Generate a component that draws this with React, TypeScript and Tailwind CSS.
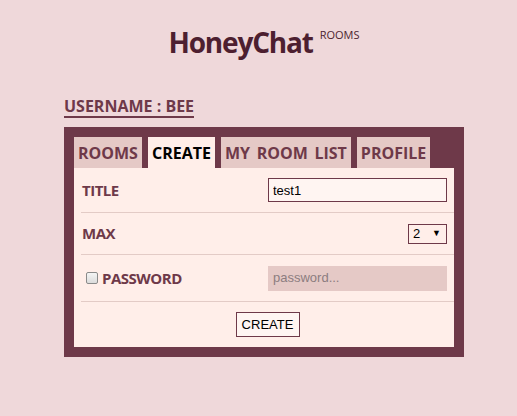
import React from "react";

export default function App() {
  const tabs = ["ROOMS", "CREATE", "MY ROOM LIST", "PROFILE"];
  return (
    <div
      className="min-h-[416px] w-full bg-[#efd8da]"
      style={{ fontFamily: '"Open Sans", "Noto Sans", sans-serif' }}
    >
      <div className="ml-[64px] w-[400px] pt-[22px]">
        <div className="flex justify-center items-start">
          <h1 className="text-[28px] font-bold leading-[40px] tracking-[-1.2px] text-[#4d1f30]">
            HoneyChat
          </h1>
          <span className="ml-[7px] mt-[6px] text-[11px] leading-[14px] text-[#4d1f30]">
            ROOMS
          </span>
        </div>
        <div className="mt-[32px]">
          <span className="inline-block border-b-2 border-[#6e3949] text-[16px] font-bold leading-[20px] text-[#6e3949]">
            USERNAME : BEE
          </span>
        </div>
        <div className="mt-[9px] bg-[#6e3949] p-[10px]">
          <div className="flex gap-[6px]">
            {tabs.map((t) => (
              <div
                key={t}
                className={
                  "h-[31px] px-[4px] pt-[5px] text-[16px] font-bold leading-[22px] [word-spacing:2.5px] " +
                  (t === "CREATE"
                    ? "bg-[#ffeee9] text-black"
                    : "bg-[#e5c9c6] text-[#6e3949]")
                }
              >
                {t}
              </div>
            ))}
          </div>
          <div className="bg-[#ffeee9] pl-[7px]">
            <div className="flex h-[45px] items-center justify-between border-b border-[#e3cbc6] pr-[7px]">
              <span className="pl-[1px] text-[15px] font-bold tracking-[-0.5px] text-[#6e3949]">TITLE</span>
              <input
                className="h-[24px] w-[179px] border border-[#6e3949] bg-[#fff5f2] px-[4px] text-[13px] text-black outline-none"
                style={{ fontFamily: '"Liberation Sans", Arial, sans-serif' }}
                defaultValue="test1"
              />
            </div>
            <div className="flex h-[42px] items-center justify-between border-b border-[#e3cbc6] pr-[7px]">
              <span className="pl-[1px] text-[15px] font-bold tracking-[-0.5px] text-[#6e3949]">MAX</span>
              <div
                className="flex h-[20px] w-[39px] items-center justify-between border border-[#6e3949] bg-[#ffeee9] pl-[4px] pr-[5px] text-[13px] text-black"
                style={{ fontFamily: '"Liberation Sans", Arial, sans-serif' }}
              >
                <span>2</span>
                <span className="text-[9px]">▼</span>
              </div>
            </div>
            <div className="flex h-[47px] items-center justify-between border-b border-[#e3cbc6] pr-[7px]">
              <div className="flex items-center">
                <span className="ml-[5px] h-[12px] w-[12px] rounded-[2px] border border-[#8a8a8a] bg-gradient-to-b from-[#f4f4f4] to-[#dcdcdc]" />
                <span className="ml-[4px] text-[15px] font-bold tracking-[-0.5px] text-[#6e3949]">PASSWORD</span>
              </div>
              <div
                className="flex h-[25px] w-[179px] items-center bg-[#e5c9c6] px-[5px] text-[13px] text-[#8c7d80]"
                style={{ fontFamily: '"Liberation Sans", Arial, sans-serif' }}
              >
                password...
              </div>
            </div>
            <div className="flex h-[45px] items-start justify-center pt-[10px]">
              <div
                className="flex h-[25px] w-[64px] items-center justify-center border border-[#6e3949] bg-[#fff5f2] text-[13px] text-black"
                style={{ fontFamily: '"Liberation Sans", Arial, sans-serif' }}
              >
                CREATE
              </div>
            </div>
          </div>
        </div>
      </div>
    </div>
  );
}
